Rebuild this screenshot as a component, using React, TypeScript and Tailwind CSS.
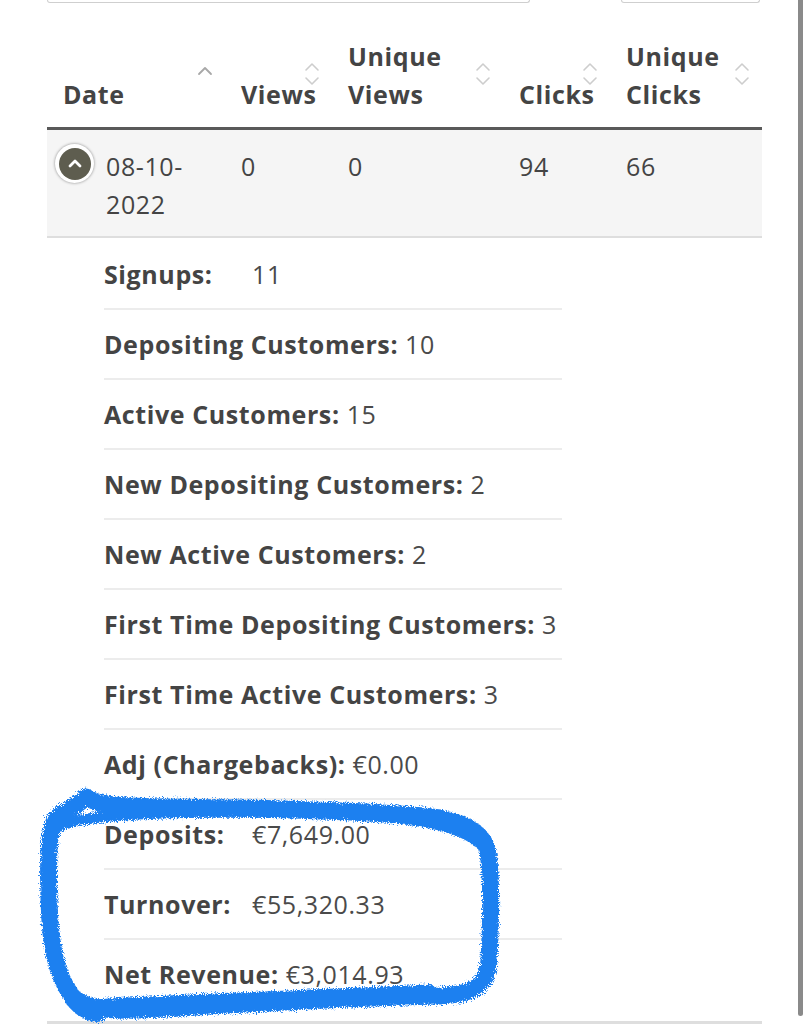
import React from 'react'

const FONT = { fontFamily: '"Open Sans", "Noto Sans", Arial, sans-serif' }

const DETAILS: { label: string; value: string }[] = [
  { label: 'Signups:', value: '11' },
  { label: 'Depositing Customers:', value: '10' },
  { label: 'Active Customers:', value: '15' },
  { label: 'New Depositing Customers:', value: '2' },
  { label: 'New Active Customers:', value: '2' },
  { label: 'First Time Depositing Customers:', value: '3' },
  { label: 'First Time Active Customers:', value: '3' },
  { label: 'Adj (Chargebacks):', value: '€0.00' },
  { label: 'Deposits:', value: '€7,649.00' },
  { label: 'Turnover:', value: '€55,320.33' },
  { label: 'Net Revenue:', value: '€3,014.93' },
]

function SortBoth() {
  return (
    <svg className="absolute right-[12px] top-[32px]" width="16" height="26" viewBox="0 0 16 26" fill="none">
      <path d="M2 9 L8 3 L14 9" stroke="#cdcdcd" strokeWidth={1.6} strokeLinecap="round" strokeLinejoin="round" />
      <path d="M2 17 L8 23 L14 17" stroke="#cdcdcd" strokeWidth={1.6} strokeLinecap="round" strokeLinejoin="round" />
    </svg>
  )
}

function SortAsc() {
  return (
    <svg className="absolute right-[12px] top-[36px]" width="16" height="12" viewBox="0 0 16 12" fill="none">
      <path d="M2 9 L8 3 L14 9" stroke="#a8a8a8" strokeWidth={1.8} strokeLinecap="round" strokeLinejoin="round" />
    </svg>
  )
}

const COLS = 'grid grid-cols-[178px_107px_171px_107px_152px]'
const TH = 'relative flex flex-col justify-end pl-4 pt-2 pb-[14px]'

export default function App() {
  return (
    <div className="relative w-[809px] h-[1024px] overflow-hidden bg-white text-[#444] tracking-[0.6px]" style={FONT}>
      {/* bottoms of the filter inputs above */}
      <div className="flex h-[3px] pl-[47px]">
        <div className="w-[483px] h-[3px] border-x border-b border-[#cfcfcf] rounded-b-[4px]" />
        <div className="ml-[91px] w-[139px] h-[3px] border-x border-b border-[#cfcfcf] rounded-b-[4px]" />
      </div>

      <div className="ml-[47px] w-[715px] mt-[26px]">
        {/* header */}
        <div className={`${COLS} border-b-[3px] border-[#595959] text-[25px] leading-[38px] font-bold text-[#444]`}>
          <div className={TH}><span>Date</span><SortAsc /></div>
          <div className={TH}><span>Views</span><SortBoth /></div>
          <div className={TH}><span>Unique<br />Views</span><SortBoth /></div>
          <div className={TH}><span>Clicks</span><SortBoth /></div>
          <div className={TH}><span>Unique<br />Clicks</span><SortBoth /></div>
        </div>

        {/* expanded row */}
        <div className={`${COLS} bg-[#f5f5f5] border-b-2 border-[#dedede] text-[25px] leading-[38px]`}>
          <div className="flex gap-3 pl-2 pt-[17px] pb-[13px]">
            <span className="-mt-[3px] flex-shrink-0 w-[39px] h-[39px] rounded-full bg-white shadow-[0_0_3px_rgba(0,0,0,0.45)] flex items-center justify-center">
              <span className="w-[32px] h-[32px] rounded-full bg-[#5e5d4f] flex items-center justify-center">
                <svg width="16" height="11" viewBox="0 0 16 11" fill="none">
                  <path d="M3 8 L8 3 L13 8" stroke="#fff" strokeWidth={2.8} strokeLinecap="round" strokeLinejoin="round" />
                </svg>
              </span>
            </span>
            <span>08-10-<br />2022</span>
          </div>
          <div className="pl-4 pt-[17px]">0</div>
          <div className="pl-4 pt-[17px]">0</div>
          <div className="pl-4 pt-[17px]">94</div>
          <div className="pl-4 pt-[17px]">66</div>
        </div>

        {/* child details */}
        <div className="pl-[57px] pt-[2px] pb-[13px] border-b-[3px] border-[#dedede]">
          <ul className="w-[458px]">
            {DETAILS.map(d => (
              <li key={d.label} className="py-[15px] border-b-2 border-[#ececec] last:border-b-0 text-[25px] leading-[38px] whitespace-nowrap">
                <span className="inline-block min-w-[141px] mr-[7px] font-bold text-[#444]">{d.label}</span>
                <span className="text-[#4a4a4a]">{d.value}</span>
              </li>
            ))}
          </ul>
        </div>
      </div>

      {/* scrollbar */}
      <div className="absolute right-[6px] top-0 w-[5px] h-[1016px] rounded-b-full bg-[#8a8a8a]" />

      {/* hand-drawn highlight */}
      <svg className="absolute inset-0 pointer-events-none" width="809" height="1024" viewBox="0 0 809 1024" fill="none">
        <defs>
          <filter id="crayon" x="-5%" y="-5%" width="110%" height="110%">
            <feTurbulence type="fractalNoise" baseFrequency="0.9" numOctaves="2" result="n" />
            <feDisplacementMap in="SourceGraphic" in2="n" scale="8" />
          </filter>
        </defs>
        <g filter="url(#crayon)" stroke="#1f80f0" strokeLinecap="round" strokeLinejoin="round">
          <path
            d="M86 797 C 78 806, 66 810, 56 818 C 48 830, 48 860, 49 900 C 50 945, 56 975, 72 996 C 88 1012, 120 1012, 180 1008 C 260 1003, 360 998, 440 996 C 475 994, 488 985, 489 960 C 491 920, 492 880, 488 852 C 484 835, 470 824, 440 818 C 380 810, 260 808, 160 807 C 120 806, 96 805, 86 797"
            strokeWidth={17}
          />
          <path
            d="M60 826 C 90 812, 200 810, 320 814 C 400 816, 455 822, 478 842 M 82 1006 C 160 1000, 300 996, 430 990 M 70 1000 C 80 1012, 90 1018, 100 1016"
            strokeWidth={11}
          />
        </g>
      </svg>
    </div>
  )
}
